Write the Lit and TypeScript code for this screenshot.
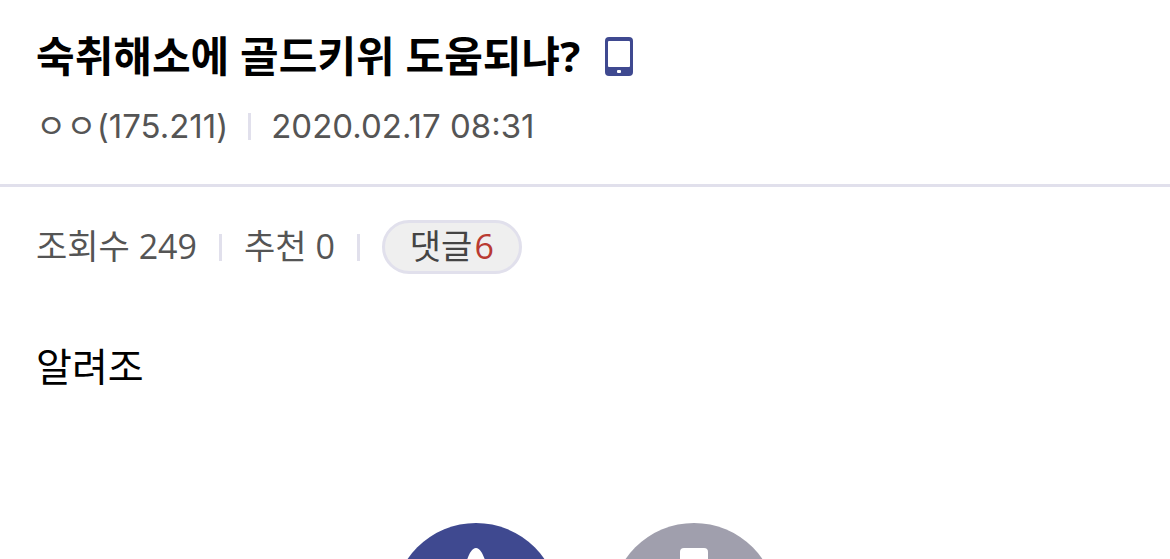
import { LitElement, html, css } from "lit";
import { customElement } from "lit/decorators.js";

@customElement("app-root")
export class AppRoot extends LitElement {
  static styles = css`
    :host {
      display: block;
      height: 100vh;
      overflow: hidden;
      background: #fff;
      color: #000;
      font-family: "Open Sans", "Noto Sans CJK KR", sans-serif;
    }
    * { box-sizing: border-box; }
    header { padding: 28px 36px 34px; border-bottom: 3px solid #e1e0ec; }
    h1 {
      display: flex; align-items: center; gap: 24px; margin: 0;
      font: 700 42px/56px "Open Sans", "Noto Sans CJK KR", sans-serif;
    }
    .phone { width: 30px; height: 40px; }
    .meta { display: flex; align-items: center; color: #555; font-size: 34px; line-height: 48px; }
    .bar { width: 3px; height: 27px; margin: 0 20px; background: #e1e0ec; }
    .byline {
      margin-top: 18px;
      font-family: Inter, "Noto Sans CJK KR", sans-serif;
      font-size: 33px;
    }
    .counts { padding: 33px 36px 0; }
    .counts .bar { margin: 0 22px; }
    .counts > span { padding-bottom: 2px; }
    .comments {
      height: 54px; padding: 0 25px 2px; border: 3px solid #e1e0ec; border-radius: 27px;
      background: #efefef; color: #444; font: inherit; line-height: 46px;
    }
    .num { margin-left: 2px; color: #b93a32; }
    .body { margin: 62px 36px 0; font-size: 39px; line-height: 60px; }
    .votes { display: flex; justify-content: center; gap: 52px; margin-top: 127px; }
    .vote { flex: none; width: 166px; height: 166px; padding: 0; border: 0; border-radius: 50%; background: #3f4990; }
    .down { background: #a09fad; }
    .vote svg { display: block; width: 166px; height: 166px; }
  `;

  render() {
    return html`
      <header>
        <h1>숙취해소에 골드키위 도움되냐?
          <svg class="phone" viewBox="0 0 30 40"><rect x="1" y="1" width="28" height="39" rx="4" fill="#3f4990"/><rect x="4" y="5" width="22" height="26" rx="1" fill="#fff"/><rect x="13" y="34" width="4" height="3" rx="1" fill="#fff"/></svg>
        </h1>
        <div class="meta byline"><span>ㅇㅇ(175.211)</span><i class="bar"></i><time>2020.02.17 08:31</time></div>
      </header>
      <div class="meta counts"><span>조회수 249</span><i class="bar"></i><span>추천 0</span><i class="bar"></i>
        <button class="comments">댓글<span class="num">6</span></button></div>
      <p class="body">알려조</p>
      <div class="votes">
        <button class="vote" aria-label="추천"><svg viewBox="0 0 166 166"><path d="M74 37C76 31 79 25 83 25C87 25 90 31 92 37L133 95H101V136H65V95H33Z" fill="#fff"/></svg></button>
        <button class="vote down" aria-label="비추천"><svg viewBox="0 0 166 166"><path d="M73 25H93Q97 25 97 29V85H130L83 138L36 85H69V29Q69 25 73 25Z" fill="#fff"/></svg></button>
      </div>`;
  }
}
